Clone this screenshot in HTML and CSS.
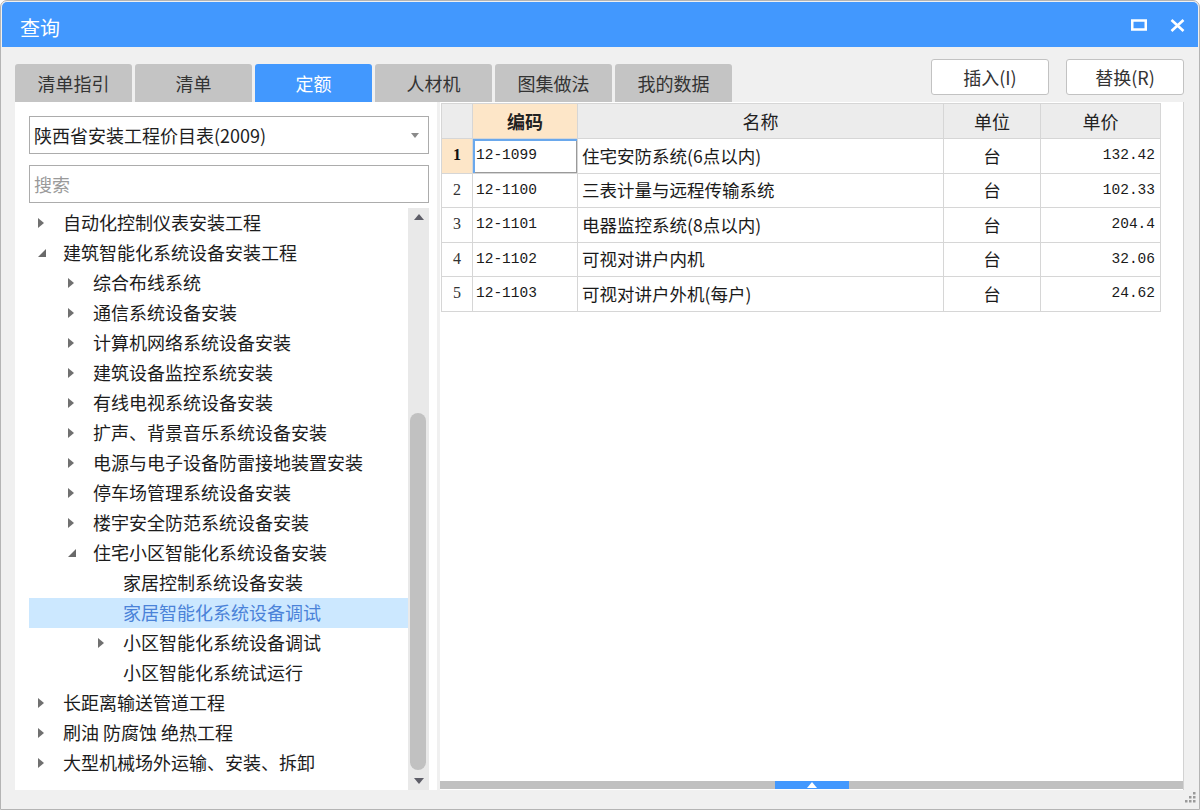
FILE: index.html
```html
<!DOCTYPE html>
<html lang="zh-CN">
<head>
<meta charset="utf-8">
<title>查询</title>
<link rel="stylesheet" href="styles.css">
</head>
<body>
<div class="window">
  <div class="titlebar">
    <span class="title">查询</span>
    <div class="controls">
      <svg class="ctl-max" width="16" height="12" viewBox="0 0 16 12"><rect x="1.25" y="1.5" width="13.5" height="9" fill="none" stroke="#fff" stroke-width="2.5"/></svg>
      <svg class="ctl-close" width="15" height="13" viewBox="0 0 15 13"><path d="M1.5 1 L13.5 12 M13.5 1 L1.5 12" stroke="#fff" stroke-width="2.6" fill="none"/></svg>
    </div>
  </div>
  <div class="body">
    <div class="toprow">
      <div class="tabs">
        <div class="tab">清单指引</div>
        <div class="tab">清单</div>
        <div class="tab active">定额</div>
        <div class="tab">人材机</div>
        <div class="tab">图集做法</div>
        <div class="tab">我的数据</div>
      </div>
      <div class="actions">
        <div class="btn">插入(I)</div>
        <div class="btn">替换(R)</div>
      </div>
    </div>
    <div class="panels">
      <div class="left">
        <div class="select">
          <span>陕西省安装工程价目表(2009)</span>
          <svg class="caret" width="8" height="5" viewBox="0 0 8 5"><polygon points="0,0 8,0 4,5" fill="#8a8a8a"/></svg>
        </div>
        <div class="search">搜索</div>
        <div class="treebox">
          <div class="tree">
            <div class="node l0"><span class="tw"><svg width="6" height="10" viewBox="0 0 6 10"><polygon points="0,0 6,5 0,10" fill="#707070"/></svg></span><span>自动化控制仪表安装工程</span></div>
            <div class="node l0"><span class="tw"><svg width="8" height="8" viewBox="0 0 8 8"><polygon points="8,0 8,8 0,8" fill="#6a6a6a"/></svg></span><span>建筑智能化系统设备安装工程</span></div>
            <div class="node l1"><span class="tw"><svg width="6" height="10" viewBox="0 0 6 10"><polygon points="0,0 6,5 0,10" fill="#707070"/></svg></span><span>综合布线系统</span></div>
            <div class="node l1"><span class="tw"><svg width="6" height="10" viewBox="0 0 6 10"><polygon points="0,0 6,5 0,10" fill="#707070"/></svg></span><span>通信系统设备安装</span></div>
            <div class="node l1"><span class="tw"><svg width="6" height="10" viewBox="0 0 6 10"><polygon points="0,0 6,5 0,10" fill="#707070"/></svg></span><span>计算机网络系统设备安装</span></div>
            <div class="node l1"><span class="tw"><svg width="6" height="10" viewBox="0 0 6 10"><polygon points="0,0 6,5 0,10" fill="#707070"/></svg></span><span>建筑设备监控系统安装</span></div>
            <div class="node l1"><span class="tw"><svg width="6" height="10" viewBox="0 0 6 10"><polygon points="0,0 6,5 0,10" fill="#707070"/></svg></span><span>有线电视系统设备安装</span></div>
            <div class="node l1"><span class="tw"><svg width="6" height="10" viewBox="0 0 6 10"><polygon points="0,0 6,5 0,10" fill="#707070"/></svg></span><span>扩声、背景音乐系统设备安装</span></div>
            <div class="node l1"><span class="tw"><svg width="6" height="10" viewBox="0 0 6 10"><polygon points="0,0 6,5 0,10" fill="#707070"/></svg></span><span>电源与电子设备防雷接地装置安装</span></div>
            <div class="node l1"><span class="tw"><svg width="6" height="10" viewBox="0 0 6 10"><polygon points="0,0 6,5 0,10" fill="#707070"/></svg></span><span>停车场管理系统设备安装</span></div>
            <div class="node l1"><span class="tw"><svg width="6" height="10" viewBox="0 0 6 10"><polygon points="0,0 6,5 0,10" fill="#707070"/></svg></span><span>楼宇安全防范系统设备安装</span></div>
            <div class="node l1"><span class="tw"><svg width="8" height="8" viewBox="0 0 8 8"><polygon points="8,0 8,8 0,8" fill="#6a6a6a"/></svg></span><span>住宅小区智能化系统设备安装</span></div>
            <div class="node l2"><span class="tw"></span><span>家居控制系统设备安装</span></div>
            <div class="node l2 selected"><span class="tw"></span><span>家居智能化系统设备调试</span></div>
            <div class="node l2"><span class="tw"><svg width="6" height="10" viewBox="0 0 6 10"><polygon points="0,0 6,5 0,10" fill="#707070"/></svg></span><span>小区智能化系统设备调试</span></div>
            <div class="node l2"><span class="tw"></span><span>小区智能化系统试运行</span></div>
            <div class="node l0"><span class="tw"><svg width="6" height="10" viewBox="0 0 6 10"><polygon points="0,0 6,5 0,10" fill="#707070"/></svg></span><span>长距离输送管道工程</span></div>
            <div class="node l0"><span class="tw"><svg width="6" height="10" viewBox="0 0 6 10"><polygon points="0,0 6,5 0,10" fill="#707070"/></svg></span><span>刷油 防腐蚀 绝热工程</span></div>
            <div class="node l0"><span class="tw"><svg width="6" height="10" viewBox="0 0 6 10"><polygon points="0,0 6,5 0,10" fill="#707070"/></svg></span><span>大型机械场外运输、安装、拆卸</span></div>
          </div>
          <div class="vscroll">
            <div class="sb-btn up"><svg width="10" height="6" viewBox="0 0 10 6"><polygon points="0,6 10,6 5,0" fill="#5e5e68"/></svg></div>
            <div class="sb-track"><div class="sb-thumb"></div></div>
            <div class="sb-btn down"><svg width="10" height="6" viewBox="0 0 10 6"><polygon points="0,0 10,0 5,6" fill="#5e5e68"/></svg></div>
          </div>
        </div>
      </div>
      <div class="right">
        <div class="gridwrap">
          <div class="grid">
            <div class="c hd"></div>
            <div class="c hd key">编码</div>
            <div class="c hd ctr">名称</div>
            <div class="c hd ctr">单位</div>
            <div class="c hd ctr">单价</div>

            <div class="c rn cur">1</div>
            <div class="c mono focus">12-1099</div>
            <div class="c name">住宅安防系统(6点以内)</div>
            <div class="c unit">台</div>
            <div class="c mono num">132.42</div>

            <div class="c rn">2</div>
            <div class="c mono">12-1100</div>
            <div class="c name">三表计量与远程传输系统</div>
            <div class="c unit">台</div>
            <div class="c mono num">102.33</div>

            <div class="c rn">3</div>
            <div class="c mono">12-1101</div>
            <div class="c name">电器监控系统(8点以内)</div>
            <div class="c unit">台</div>
            <div class="c mono num">204.4</div>

            <div class="c rn">4</div>
            <div class="c mono">12-1102</div>
            <div class="c name">可视对讲户内机</div>
            <div class="c unit">台</div>
            <div class="c mono num">32.06</div>

            <div class="c rn">5</div>
            <div class="c mono">12-1103</div>
            <div class="c name">可视对讲户外机(每户)</div>
            <div class="c unit">台</div>
            <div class="c mono num">24.62</div>
          </div>
        </div>
        <div class="hbar">
          <div class="hbar-tab"><svg width="10" height="6" viewBox="0 0 10 6"><polygon points="0,6 10,6 5,0" fill="#fff"/></svg></div>
        </div>
      </div>
    </div>
  </div>
  <svg class="grip" width="14" height="14" viewBox="0 0 14 14">
    <rect x="10" y="2" width="2.5" height="2.5" fill="#9a9a9a"/>
    <rect x="6" y="6" width="2.5" height="2.5" fill="#9a9a9a"/>
    <rect x="10" y="6" width="2.5" height="2.5" fill="#9a9a9a"/>
    <rect x="2" y="10" width="2.5" height="2.5" fill="#9a9a9a"/>
    <rect x="6" y="10" width="2.5" height="2.5" fill="#9a9a9a"/>
    <rect x="10" y="10" width="2.5" height="2.5" fill="#9a9a9a"/>
  </svg>
</div>
</body>
</html>
```

FILE: styles.css
```css
* { box-sizing: border-box; }

html, body {
  margin: 0;
  padding: 0;
  background: #ffffff;
}

body {
  font-family: "Noto Sans CJK SC", "Noto Sans", sans-serif;
  font-size: 18px;
  color: #222;
}

.window {
  position: relative;
  width: 1200px;
  height: 810px;
  border: 1px solid #b4b4b4;
  border-radius: 7px 7px 0 0;
  padding: 1px;
  background: #f0f0f0;
  display: flex;
  flex-direction: column;
  overflow: hidden;
}

.titlebar {
  height: 45px;
  flex: none;
  background: #4298fe;
  border-radius: 5px 5px 0 0;
  display: flex;
  align-items: center;
  justify-content: space-between;
  padding: 3px 13px 0 18px;
}

.title {
  color: #fff;
  font-size: 20px;
  line-height: 1;
  padding-top: 3px;
}

.controls {
  display: flex;
  align-items: center;
  gap: 23px;
  padding-bottom: 2px;
}

.controls svg { display: block; }

.body {
  flex: 1;
  display: flex;
  flex-direction: column;
  padding: 12px 14px 18px 13px;
  min-height: 0;
}

.toprow {
  display: flex;
  justify-content: space-between;
  align-items: flex-start;
  flex: none;
}

.tabs {
  display: flex;
  gap: 3px;
  margin-top: 5px;
}

.tab {
  width: 117px;
  height: 38px;
  background: #c4c4c4;
  border-radius: 3px 3px 0 0;
  display: flex;
  align-items: center;
  justify-content: center;
  color: #333;
  font-size: 18px;
}

.tab.active {
  background: #4298fe;
  color: #fff;
}

.actions {
  display: flex;
  gap: 17px;
}

.btn {
  width: 118px;
  height: 36px;
  background: #fff;
  border: 1px solid #c2c2c2;
  border-radius: 3px;
  display: flex;
  align-items: center;
  justify-content: center;
  color: #333;
  font-size: 18px;
}

.panels {
  flex: 1;
  display: flex;
  gap: 3px;
  min-height: 0;
}

/* left panel */
.left {
  width: 422px;
  flex: none;
  background: #fff;
  padding: 14px 8px 0 14px;
  display: flex;
  flex-direction: column;
}

.select {
  height: 38px;
  flex: none;
  border: 1px solid #acacac;
  display: flex;
  align-items: center;
  justify-content: space-between;
  padding: 0 9px 0 4px;
  color: #1e1e1e;
}

.search {
  height: 38px;
  flex: none;
  margin-top: 11px;
  border: 1px solid #acacac;
  display: flex;
  align-items: center;
  padding-left: 4px;
  color: #9a9a9a;
}

.treebox {
  flex: 1;
  margin-top: 5px;
  display: flex;
  min-height: 0;
}

.tree {
  flex: 1;
  padding-top: 0;
  overflow: hidden;
}

.node {
  height: 30px;
  display: flex;
  align-items: center;
  white-space: nowrap;
  color: #1c1c1c;
  padding-bottom: 2px;
}

.node.l0 { padding-left: 9px; }
.node.l1 { padding-left: 39px; }
.node.l2 { padding-left: 69px; }

.tw {
  width: 25px;
  flex: none;
  display: flex;
  align-items: center;
  padding-top: 1px;
}

.tw svg { display: block; }

.node.selected {
  background: #cce8ff;
  color: #4a82d8;
}

.vscroll {
  width: 21px;
  flex: none;
  background: #e9e9e9;
  display: flex;
  flex-direction: column;
}

.sb-btn {
  display: flex;
  justify-content: center;
  align-items: center;
  flex: none;
}

.sb-btn.up { height: 16px; padding-top: 1px; }
.sb-btn.down { height: 19px; }

.sb-track {
  flex: 1;
  display: flex;
  flex-direction: column;
  justify-content: flex-end;
  padding: 0 0 1px 2px;
}

.sb-thumb {
  width: 16px;
  height: 357px;
  border-radius: 8px;
  background: #c1c1c1;
}

/* right panel */
.right {
  flex: 1;
  background: #fff;
  border-right: 1px solid #d2d2d2;
  display: flex;
  flex-direction: column;
  min-width: 0;
}

.gridwrap {
  flex: 1;
  padding: 1px 0 0 1px;
  background: #fff;
}

.grid {
  display: grid;
  grid-template-columns: 31px 105px 366px 97px 120px;
  grid-template-rows: 35px repeat(5, 34.5px);
  width: max-content;
  border-left: 1px solid #d6d6d6;
  border-top: 1px solid #d6d6d6;
}

.c {
  border-right: 1px solid #d6d6d6;
  border-bottom: 1px solid #d6d6d6;
  display: flex;
  align-items: center;
  white-space: nowrap;
  color: #1a1a1a;
  font-size: 17.5px;
  padding-bottom: 1px;
}

.c.hd {
  background: #ececec;
  justify-content: center;
  font-size: 18px;
  color: #222;
}

.c.hd.key {
  background: #fde6c8;
  font-weight: bold;
}

.c.rn {
  justify-content: center;
  font-family: "Liberation Serif", serif;
  font-size: 16px;
  color: #333;
}

.c.rn.cur {
  background: #fde6c8;
  font-weight: bold;
  color: #111;
}

.c.mono {
  font-family: "Liberation Mono", monospace;
  font-size: 14.5px;
  padding-left: 3px;
}

.c.focus {
  box-shadow: inset 2px 2px 0 #6aa8ec, inset -1px -1px 0 #9a9a9a;
}

.c.name {
  padding-left: 4px;
}

.c.unit {
  justify-content: center;
}

.c.num {
  justify-content: flex-end;
  padding-right: 5px;
  padding-left: 0;
}

.hbar {
  height: 8px;
  flex: none;
  margin-bottom: 1px;
  background: #c0c0c0;
  display: flex;
  justify-content: center;
}

.hbar-tab {
  width: 74px;
  background: #4298fe;
  display: flex;
  align-items: center;
  justify-content: center;
}

.hbar-tab svg { display: block; }

.grip {
  position: absolute;
  right: 2px;
  bottom: 5px;
}
```
